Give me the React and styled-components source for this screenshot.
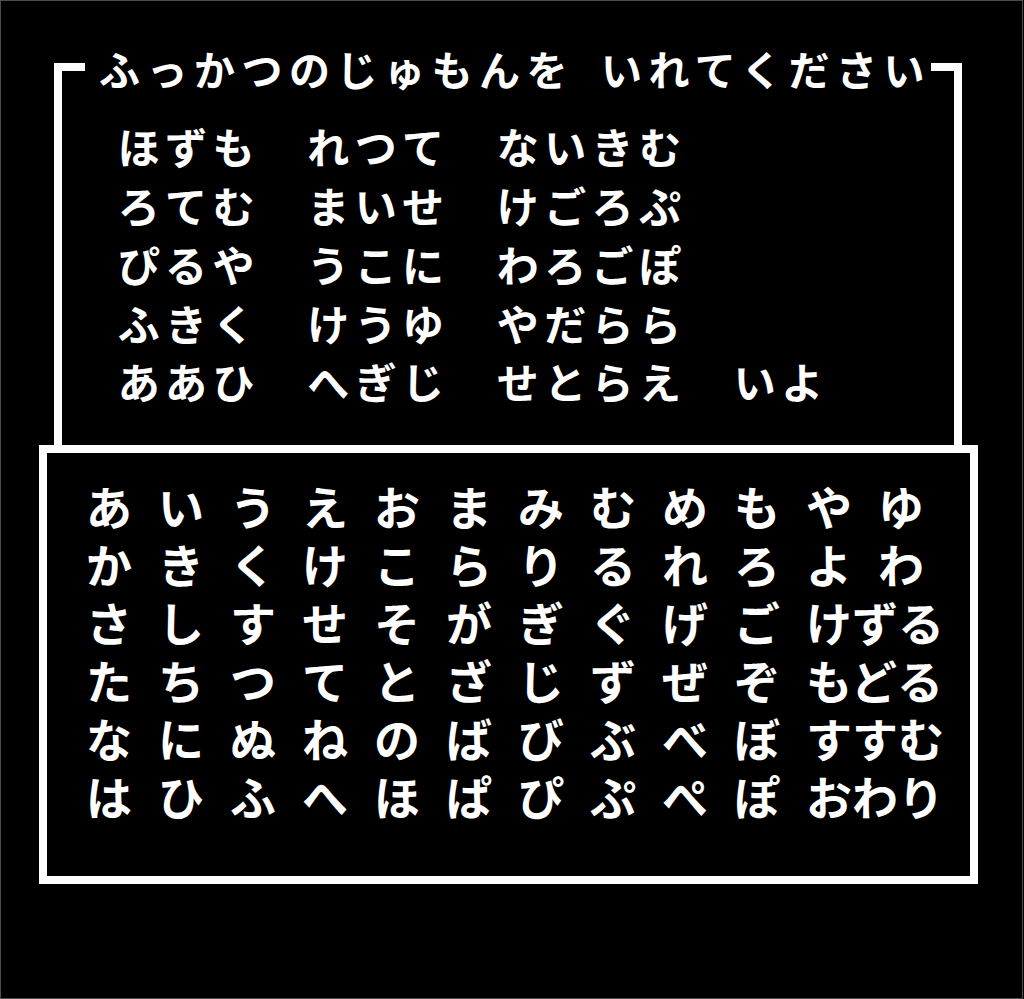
import React from 'react';
import styled, { createGlobalStyle } from 'styled-components';

const GlobalStyle = createGlobalStyle`
  html, body {
    margin: 0;
    padding: 0;
    background: #000;
  }
  body {
    font-family: "Noto Sans CJK JP", "Noto Sans", sans-serif;
    color: #fff;
  }
`;

const Screen = styled.div`
  box-sizing: border-box;
  width: 1023px;
  height: 999px;
  border: 1px solid #4d4d4d;
  background: #000;
  padding-top: 47px;
  display: flex;
  flex-direction: column;
`;

const TopWindow = styled.section`
  margin-left: 53px;
  width: 908px;
  height: 397px;
  display: flex;
  flex-direction: column;
`;

const TitleBar = styled.div`
  display: flex;
  height: 40px;
`;

const Corner = styled.div`
  box-sizing: border-box;
  width: 31px;
  flex: ${p => (p.$grow ? '1' : 'none')};
  margin-top: 15px;
  border-top: 8px solid #fff;
  ${p => (p.$side === 'left' ? 'border-left: 8px solid #fff;' : 'border-right: 8px solid #fff;')}
`;

const Title = styled.h1`
  margin: 0 0 0 14px;
  font-size: 41px;
  font-weight: 600;
  line-height: 40px;
  letter-spacing: 6.5px;
  white-space: pre;
`;

const PasswordBody = styled.div`
  flex: 1;
  border-left: 8px solid #fff;
  border-right: 8px solid #fff;
  padding: 29px 0 0 53px;
`;

const Line = styled.div`
  display: flex;
  height: 58.75px;
  align-items: center;
`;

const Glyph = styled.span`
  width: 47.4px;
  flex: none;
  text-align: center;
  font-size: 42px;
  font-weight: 600;
  line-height: 1;
`;

const KeyWindow = styled.section`
  box-sizing: border-box;
  margin-left: 38px;
  width: 939px;
  height: 439px;
  border: 8px solid #fff;
  padding: 23px 0 0 39px;
`;

const KeyGrid = styled.div`
  display: grid;
  grid-template-columns: repeat(12, 72px);
  grid-auto-rows: 58px;
  align-items: center;
`;

const Key = styled.span`
  grid-column: ${p => (p.$wide ? 'span 2' : 'auto')};
  font-size: 46px;
  font-weight: 600;
  line-height: 1;
  white-space: pre;
`;

const password = [
  'ほずも　れつて　ないきむ',
  'ろてむ　まいせ　けごろぷ',
  'ぴるや　うこに　わろごぽ',
  'ふきく　けうゆ　やだらら',
  'ああひ　へぎじ　せとらえ　いよ',
];

const keyRows = [
  ['あ', 'い', 'う', 'え', 'お', 'ま', 'み', 'む', 'め', 'も', 'や', 'ゆ'],
  ['か', 'き', 'く', 'け', 'こ', 'ら', 'り', 'る', 'れ', 'ろ', 'よ', 'わ'],
  ['さ', 'し', 'す', 'せ', 'そ', 'が', 'ぎ', 'ぐ', 'げ', 'ご', 'けずる'],
  ['た', 'ち', 'つ', 'て', 'と', 'ざ', 'じ', 'ず', 'ぜ', 'ぞ', 'もどる'],
  ['な', 'に', 'ぬ', 'ね', 'の', 'ば', 'び', 'ぶ', 'べ', 'ぼ', 'すすむ'],
  ['は', 'ひ', 'ふ', 'へ', 'ほ', 'ぱ', 'ぴ', 'ぷ', 'ぺ', 'ぽ', 'おわり'],
];

export default function App() {
  return (
    <>
      <GlobalStyle />
      <Screen>
        <TopWindow>
          <TitleBar>
            <Corner $side="left" />
            <Title>{'ふっかつのじゅもんを\u2002いれてください'}</Title>
            <Corner $side="right" $grow />
          </TitleBar>
          <PasswordBody>
            {password.map((row, i) => (
              <Line key={i}>
                {Array.from(row).map((ch, j) => (
                  <Glyph key={j}>{ch === '　' ? '' : ch}</Glyph>
                ))}
              </Line>
            ))}
          </PasswordBody>
        </TopWindow>
        <KeyWindow>
          <KeyGrid>
            {keyRows.map((row, i) =>
              row.map((k, j) => (
                <Key key={`${i}-${j}`} $wide={k.length > 1}>{k}</Key>
              ))
            )}
          </KeyGrid>
        </KeyWindow>
      </Screen>
    </>
  );
}
